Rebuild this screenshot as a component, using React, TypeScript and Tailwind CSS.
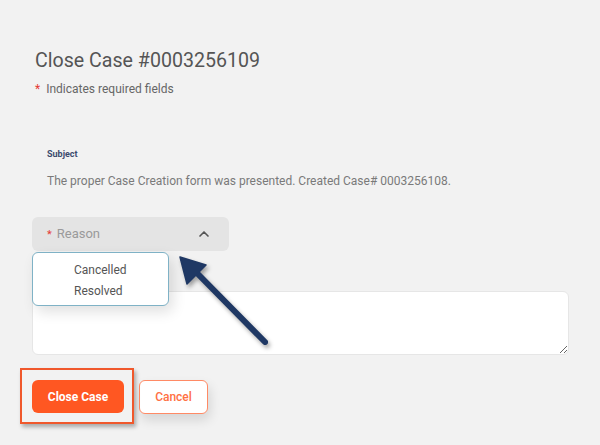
import React from 'react';
import { ChevronUp } from 'lucide-react';

const App: React.FC = () => {
  const reasons = ['Cancelled', 'Resolved'];

  return (
    <div className="relative w-[600px] h-[445px] overflow-hidden bg-[#f2f2f2] font-['Roboto',sans-serif] px-[32px] pt-[48px]">
      {/* Header */}
      <h1 className="ml-[3px] text-[19.6px] leading-[26px] text-[#555]">Close Case #0003256109</h1>
      <p className="ml-[3px] mt-[7px] text-[12px] leading-[16px] text-[#666]">
        <span className="text-[#e53935] mr-[6px]">*</span>Indicates required fields
      </p>

      {/* Subject */}
      <div className="ml-[15px] mt-[51px]">
        <div className="text-[9px] leading-[12px] font-bold text-[#3c4b6e]">Subject</div>
        <p className="mt-[13px] text-[12px] leading-[16px] text-[#7a7a7a]">
          The proper Case Creation form was presented. Created Case# 0003256108.
        </p>
      </div>

      {/* Reason select */}
      <div className="relative mt-[28px] w-[197px]">
        <div className="flex items-center justify-between h-[34px] rounded-md bg-[#e4e4e4] pl-[15px] pr-[17px]">
          <span className="text-[13px] text-[#9a9a9a]">
            <span className="text-[#e53935] mr-[5px] text-[11px]">*</span>Reason
          </span>
          <ChevronUp size={16} strokeWidth={2.5} className="text-[#555]" />
        </div>

        {/* Open menu */}
        <div className="absolute left-0 top-[35px] z-10 w-[137px] h-[54px] rounded-md border border-[#7fb2c6] bg-white pl-[41px] pt-[7px] shadow-[4px_6px_14px_rgba(0,0,0,0.12)]">
          {reasons.map((r) => (
            <div key={r} className="text-[12px] leading-[21px] text-[#555]">{r}</div>
          ))}
        </div>
      </div>

      {/* Comments */}
      <textarea className="block mt-[40px] w-[537px] h-[64px] rounded-md border border-[#e6e6e6] bg-white outline-none" />

      {/* Actions */}
      <div className="flex items-start gap-[15px] mt-[25px]">
        <div className="relative">
          <button className="w-[92px] h-[33px] rounded-md bg-[#ff5722] text-white text-[12px] font-bold">Close Case</button>
          <div className="absolute -left-[12px] -top-[12px] w-[114px] h-[56px] border-2 border-[#f0582c] shadow-[2px_3px_4px_rgba(0,0,0,0.3)] pointer-events-none" />
        </div>
        <button className="w-[69px] h-[34px] rounded-md border border-[#ff8a65] bg-white text-[#ff7043] text-[12px] font-medium shadow-[2px_6px_12px_rgba(0,0,0,0.12)]">
          Cancel
        </button>
      </div>

      {/* Annotation arrow */}
      <svg
        className="absolute left-0 top-0 pointer-events-none z-20"
        width="600"
        height="445"
        style={{ filter: 'drop-shadow(2px 3px 2px rgba(0,0,0,0.35))' }}
      >
        <line x1="265" y1="342" x2="192" y2="268" stroke="#1f3864" strokeWidth="6" strokeLinecap="round" />
        <polygon points="180,257 206,265 187,284" fill="#1f3864" stroke="#1f3864" strokeWidth="1.5" strokeLinejoin="round" />
      </svg>
    </div>
  );
};

export default App;
